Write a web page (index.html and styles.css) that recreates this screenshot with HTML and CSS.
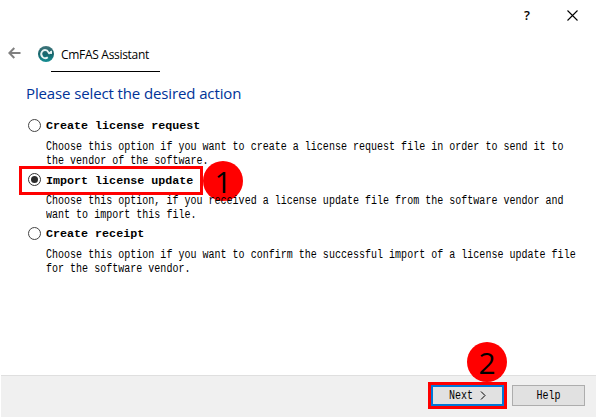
FILE: index.html
```html
<!DOCTYPE html>
<html lang="en">
<head>
<meta charset="utf-8">
<title>CmFAS Assistant</title>
<link rel="stylesheet" href="styles.css">
</head>
<body>
<div class="wizard">
  <header class="titlebar">
    <span class="help-mark">?</span>
    <svg class="close" width="11" height="11" viewBox="0 0 11 11"><path d="M.5.5l10 10M10.5.5l-10 10" stroke="#000" stroke-width="1.1"/></svg>
  </header>
  <div class="caption">
    <svg class="back" width="13" height="12" viewBox="0 0 13 12"><path d="M12.5 6H1.5M6.3 1L1.3 6l5 5" fill="none" stroke="#808080" stroke-width="2"/></svg>
    <svg class="logo" width="16" height="16" viewBox="0 0 16 16">
      <defs><linearGradient id="teal" x1="0" y1="0" x2="0" y2="1"><stop offset="0" stop-color="#42757b"/><stop offset=".5" stop-color="#16656c"/><stop offset="1" stop-color="#168f94"/></linearGradient></defs>
      <circle cx="8" cy="8" r="8" fill="url(#teal)"/>
      <path d="M9.8 11.2A4 4 0 1 1 9 4.5L11.2 7.2 13.6 5.6" fill="none" stroke="#e6f2f2" stroke-width="1.8"/>
      <path d="M9.6 7.4l4.4.6V4.6z" fill="#e6f2f2"/>
    </svg>
    <span class="caption-text">CmFAS Assistant</span>
  </div>
  <main class="content">
    <h1>Please select the desired action</h1>
    <section class="option">
      <div class="choice"><i class="radio"></i><b>Create license request</b></div>
      <p>Choose this option if you want to create a license request file in order to send it to<br>the vendor of the software.</p>
    </section>
    <section class="option">
      <div class="choice marked"><i class="radio checked"></i><b>Import license update</b>
        <svg class="badge badge-one" width="40" height="40"><circle cx="20" cy="20" r="20" fill="#f00"/><text x="20" y="31.5" text-anchor="middle">1</text></svg>
      </div>
      <p>Choose this option, if you received a license update file from the software vendor and<br>want to import this file.</p>
    </section>
    <section class="option">
      <div class="choice"><i class="radio"></i><b>Create receipt</b></div>
      <p>Choose this option if you want to confirm the successful import of a license update file<br>for the software vendor.</p>
    </section>
  </main>
  <footer class="footer">
    <div class="next-mark">
      <div class="button primary"><span>Next</span><svg width="6" height="9" viewBox="0 0 6 9"><path d="M1 .5l4 4-4 4" fill="none" stroke="#000"/></svg></div>
      <svg class="badge badge-two" width="40" height="40"><circle cx="20" cy="20" r="20" fill="#f00"/><text x="20" y="32" text-anchor="middle">2</text></svg>
    </div>
    <div class="button"><span>Help</span></div>
  </footer>
</div>
</body>
</html>
```

FILE: styles.css
```css
* { box-sizing: border-box; }
body { margin: 0; background: #fff; color: #000; overflow: hidden; }
svg { display: block; }
.wizard { width: 596px; height: 417px; display: flex; flex-direction: column; }
.titlebar { height: 32px; display: flex; align-items: center; justify-content: flex-end; gap: 37px; padding: 0 18px 2px 0; }
.help-mark { font: 600 13px/16px "Open Sans", sans-serif; }
.caption { height: 40px; width: 109px; margin-left: 51px; border-bottom: 1px solid #000; display: flex; align-items: center; white-space: nowrap; }
.back { flex: none; margin: 3px 17px 0 -43px; }
.logo { flex: none; margin: 5px 7px 0 0; }
.caption-text { font: 12px/16px "Open Sans", sans-serif; letter-spacing: -.3px; margin-top: 6px; }
.content { flex: 1; padding: 10px 0 0 19px; }
h1 { margin: 0 0 10px 7px; font: 15px/22px "Open Sans", sans-serif; color: #003399; letter-spacing: -.12px; white-space: nowrap; }
.option { display: flow-root; height: 54px; }
.choice { width: 184px; height: 22px; display: flex; align-items: center; padding-left: 9px; position: relative; }
.choice b { font: bold 11.7px/14px "Liberation Mono", monospace; margin-left: 5px; white-space: nowrap; position: relative; top: 1px; }
.radio { width: 13px; height: 13px; border: 1px solid #444; border-radius: 50%; background: #fff; flex: none; }
.radio.checked { display: flex; align-items: center; justify-content: center; border-color: #333; }
.radio.checked::before { content: ""; width: 7px; height: 7px; border-radius: 50%; background: #2b2b2b; }
.marked { height: 29px; margin: -2px 0 -5px; border: 3px solid #f00; padding: 0 0 2px 6px; }
.option p { margin: 4px 0 0 27px; font: 10px/11.667px "Liberation Mono", monospace; letter-spacing: .018px; white-space: nowrap; transform: scaleY(1.2); transform-origin: 0 0; position: relative; z-index: 2; }
.badge { position: absolute; z-index: 1; }
.badge text { font: 30px "Open Sans", sans-serif; }
.badge-one { left: 181px; top: -8px; }
.footer { height: 42px; margin-left: 1px; background: #f0f0f0; border-top: 1px solid #dfdfdf; display: flex; justify-content: flex-end; align-items: flex-start; gap: 5px; padding: 6px 11px 0 0; }
.next-mark { border: 3px solid #f00; width: 79px; height: 27px; position: relative; }
.badge-two { left: 36px; top: -43px; }
.button { width: 73px; height: 21px; background: #e1e1e1; border: 1px solid #adadad; display: flex; align-items: center; justify-content: center; }
.button span { font: 10px/12px "Liberation Mono", monospace; transform: scaleY(1.2); position: relative; top: 1px; }
.primary { border: 2px solid #0078d7; gap: 7px; }
.footer > .button { margin-top: 3px; }
```
